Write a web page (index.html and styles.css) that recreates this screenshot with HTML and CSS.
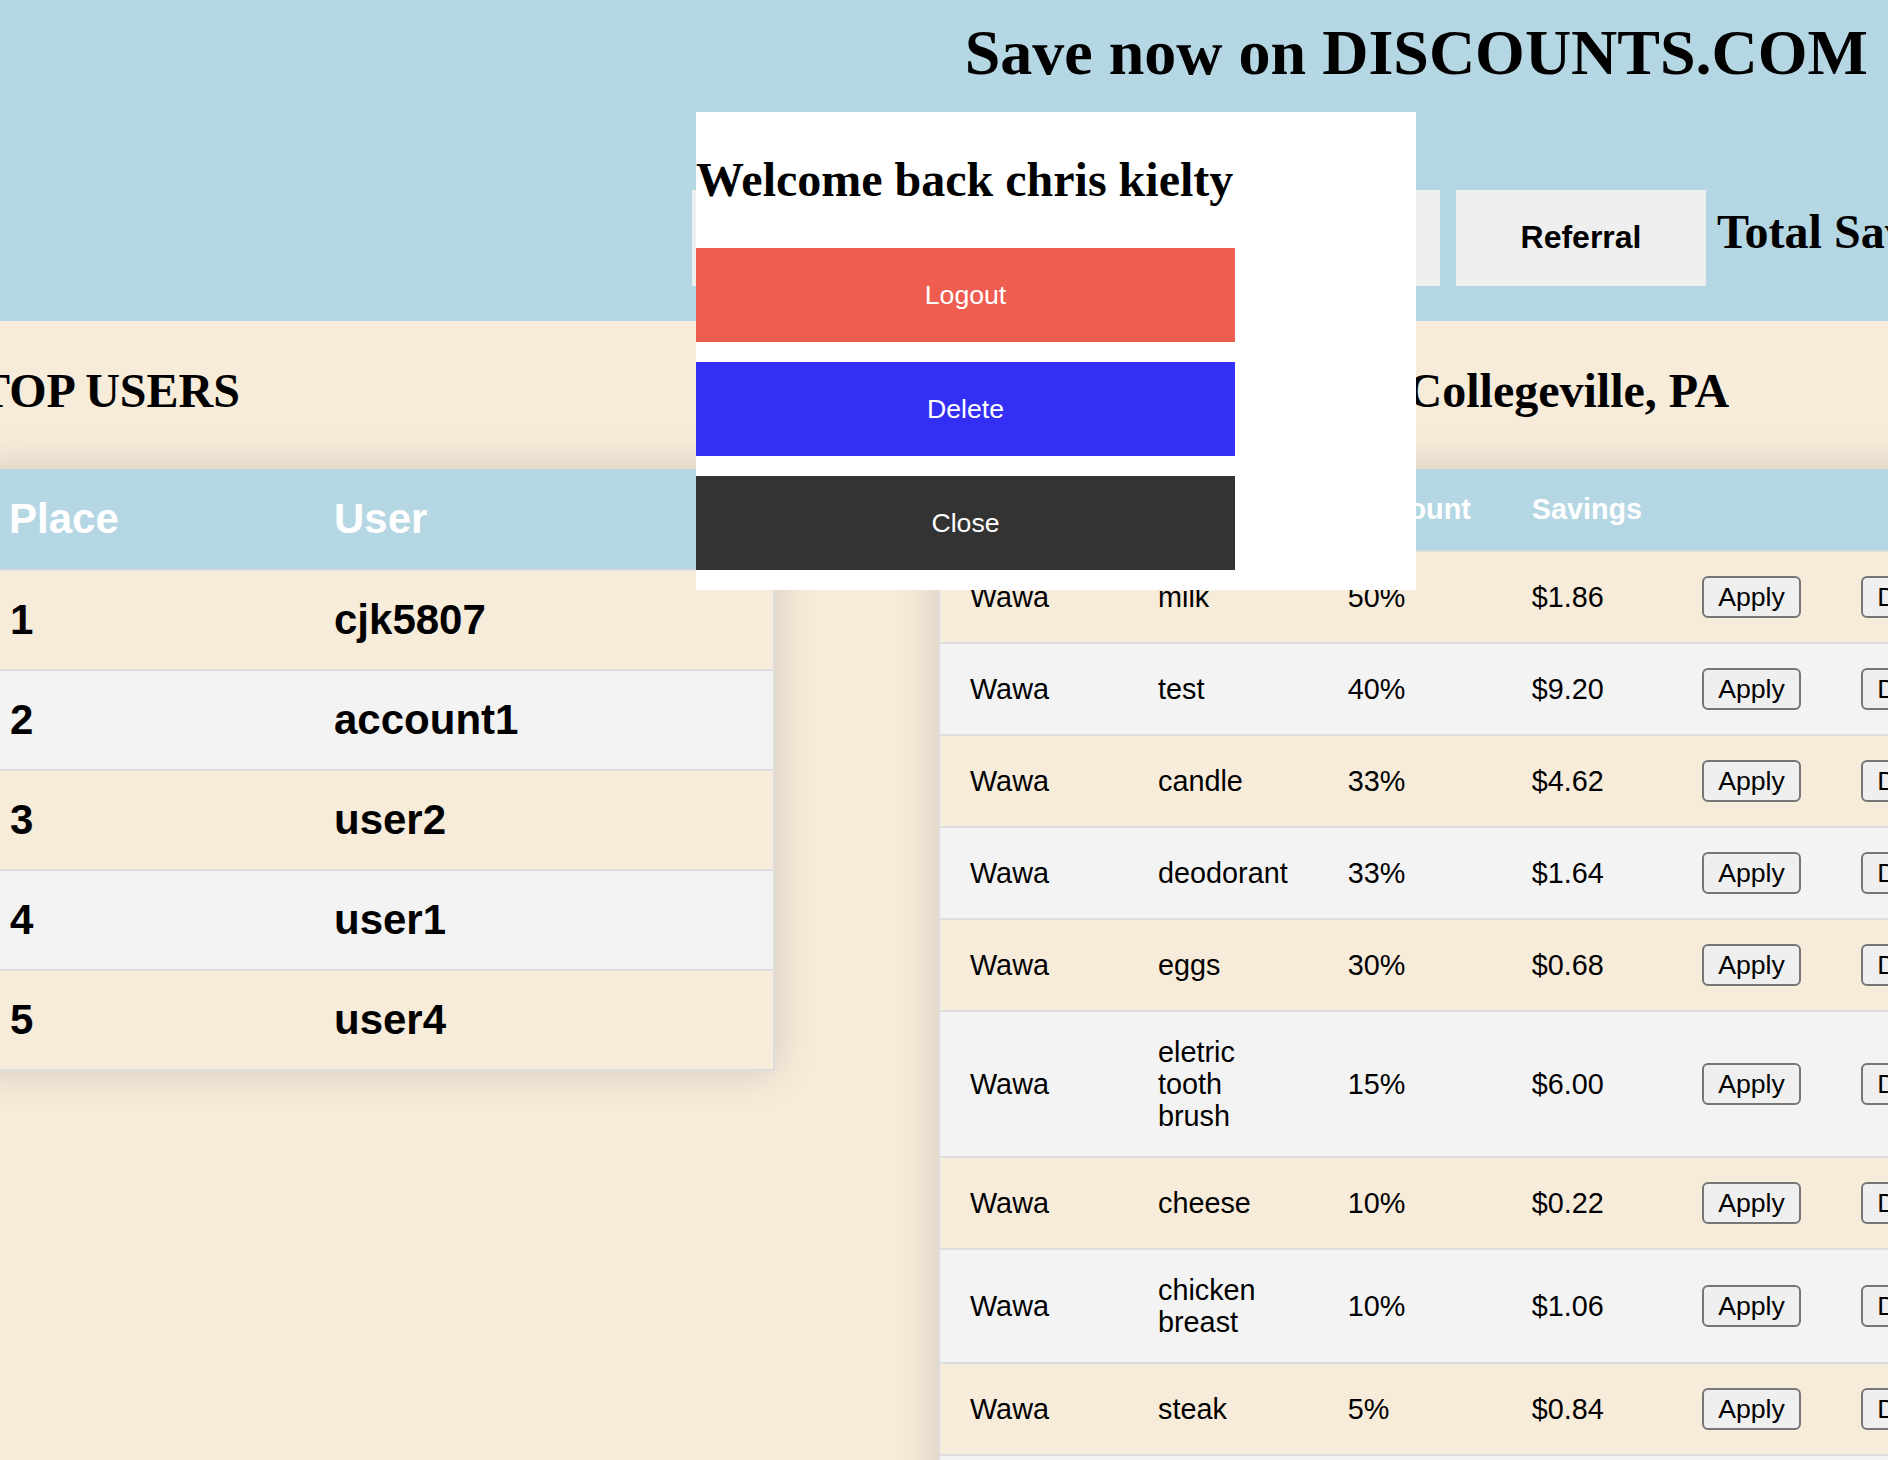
FILE: index.html
```html
<!DOCTYPE html>
<html lang="en">
<head>
<meta charset="utf-8">
<title>DISCOUNTS.COM</title>
<link rel="stylesheet" href="styles.css">
</head>
<body>
<header class="top">
  <h1 class="brand">Save now on DISCOUNTS.COM</h1>
  <nav class="nav">
    <div class="nav-buttons">
      <button class="nav-btn wide">Home</button>
      <button class="nav-btn wide">Add Discount</button>
      <button class="nav-btn">Referral</button>
    </div>
    <h2 class="total">Total Savings: $26.12</h2>
  </nav>
</header>

<main class="board">
  <section class="col">
    <h2 class="col-title">TOP USERS</h2>
    <table class="table leaders">
      <thead>
        <tr><th class="w-place">Place</th><th class="w-user">User</th></tr>
      </thead>
      <tbody>
        <tr><td>1</td><td>cjk5807</td></tr>
        <tr><td>2</td><td>account1</td></tr>
        <tr><td>3</td><td>user2</td></tr>
        <tr><td>4</td><td>user1</td></tr>
        <tr><td>5</td><td>user4</td></tr>
      </tbody>
    </table>
  </section>

  <section class="col">
    <h2 class="col-title"><span class="lead-in">TOP DISCOUNTS IN</span> Collegeville, PA</h2>
    <table class="table deals">
      <thead>
        <tr>
          <th class="w-store">Store</th>
          <th class="w-item">Item</th>
          <th class="w-disc">Discount</th>
          <th class="w-save">Savings</th>
          <th class="w-act"></th>
          <th class="w-act2"></th>
        </tr>
      </thead>
      <tbody>
        <tr><td>Wawa</td><td>milk</td><td>50%</td><td>$1.86</td><td><button class="act">Apply</button></td><td><button class="act">Delete</button></td></tr>
        <tr><td>Wawa</td><td>test</td><td>40%</td><td>$9.20</td><td><button class="act">Apply</button></td><td><button class="act">Delete</button></td></tr>
        <tr><td>Wawa</td><td>candle</td><td>33%</td><td>$4.62</td><td><button class="act">Apply</button></td><td><button class="act">Delete</button></td></tr>
        <tr><td>Wawa</td><td>deodorant</td><td>33%</td><td>$1.64</td><td><button class="act">Apply</button></td><td><button class="act">Delete</button></td></tr>
        <tr><td>Wawa</td><td>eggs</td><td>30%</td><td>$0.68</td><td><button class="act">Apply</button></td><td><button class="act">Delete</button></td></tr>
        <tr><td>Wawa</td><td>eletric tooth brush</td><td>15%</td><td>$6.00</td><td><button class="act">Apply</button></td><td><button class="act">Delete</button></td></tr>
        <tr><td>Wawa</td><td>cheese</td><td>10%</td><td>$0.22</td><td><button class="act">Apply</button></td><td><button class="act">Delete</button></td></tr>
        <tr><td>Wawa</td><td>chicken breast</td><td>10%</td><td>$1.06</td><td><button class="act">Apply</button></td><td><button class="act">Delete</button></td></tr>
        <tr><td>Wawa</td><td>steak</td><td>5%</td><td>$0.84</td><td><button class="act">Apply</button></td><td><button class="act">Delete</button></td></tr>
        <tr><td>Wawa</td><td>bread</td><td>5%</td><td>$0.15</td><td><button class="act">Apply</button></td><td><button class="act">Delete</button></td></tr>
      </tbody>
    </table>
  </section>
</main>

<div class="modal">
  <h2 class="modal-title">Welcome back chris kielty</h2>
  <button class="mbtn logout">Logout</button>
  <button class="mbtn delete">Delete</button>
  <button class="mbtn close">Close</button>
</div>
</body>
</html>
```

FILE: styles.css
```css
* {
  box-sizing: border-box;
}

html,
body {
  margin: 0;
  padding: 0;
  overflow: hidden;
}

body {
  position: relative;
  width: 1888px;
  height: 1460px;
  background: #f7ebda;
  color: #000;
  font-family: "Liberation Serif", "Times New Roman", serif;
}

/* ---------- header ---------- */
.top {
  display: flex;
  flex-direction: column;
  height: 321px;
  background: #b5d7e3;
}

.brand {
  margin: 16px 20px 0 0;
  font-size: 64px;
  line-height: 74px;
  font-weight: bold;
  text-align: right;
  white-space: nowrap;
}

.nav {
  display: flex;
  align-items: baseline;
  gap: 11px;
  margin: 100px 0 0 692px;
  white-space: nowrap;
}

.nav-buttons {
  display: flex;
  align-items: baseline;
  gap: 16px;
  flex: none;
}

.nav-btn {
  flex: none;
  width: 250px;
  height: 96px;
  padding: 29px 0 31px;
  border: none;
  background: #efefef;
  color: #000;
  font-family: "Liberation Sans", Arial, sans-serif;
  font-size: 32px;
  line-height: 36px;
  font-weight: bold;
  text-align: center;
}

.nav-btn.wide {
  width: 366px;
}

.total {
  flex: none;
  margin: 0;
  font-size: 48px;
  line-height: 53px;
  font-weight: bold;
}

/* ---------- board ---------- */
.board {
  display: flex;
  align-items: flex-start;
  gap: 163px;
  margin-left: -22px;
  padding-top: 43px;
}

.col {
  flex: none;
}

.col-title {
  margin: 0 0 52px;
  font-size: 48px;
  line-height: 53px;
  font-weight: bold;
  white-space: nowrap;
}

.lead-in {
  margin-right: 5px;
}

.table {
  border-collapse: collapse;
  box-shadow: 0 0 40px rgba(0, 0, 0, 0.15);
  font-family: "Liberation Sans", Arial, sans-serif;
}

.table thead tr {
  background: #b5d7e3;
  color: #fff;
  text-align: left;
  border-bottom: 2px solid #dddddd;
}

.table tbody tr {
  border-bottom: 2px solid #dddddd;
  border-left: 2px solid #dddddd;
  border-right: 2px solid #dddddd;
}

.table tbody tr:nth-of-type(even) {
  background: #f3f3f3;
}

/* leaders */
.leaders th,
.leaders td {
  padding: 25px 30px;
  font-size: 42px;
  line-height: 48px;
  font-weight: bold;
}

.leaders th {
  padding-top: 26px;
  padding-bottom: 26px;
}

.w-place { width: 325px; }
.w-user { width: 470px; }

/* deals */
.deals th,
.deals td {
  padding: 24px 30px;
  font-size: 28.8px;
  line-height: 32px;
  vertical-align: middle;
}

.deals th {
  font-weight: bold;
  padding-bottom: 25px;
}

.deals td {
  font-weight: normal;
}

.w-store { width: 189px; }
.w-item { width: 189px; }
.w-disc { width: 184px; }
.w-save { width: 170px; }
.w-act { width: 159px; }
.w-act2 { width: 160px; }

.act {
  display: block;
  height: 42px;
  padding: 0 14px;
  border: 2px solid #767676;
  border-radius: 6px;
  background: #efefef;
  color: #000;
  font-family: "Liberation Sans", Arial, sans-serif;
  font-size: 26.67px;
  line-height: 36px;
}

/* ---------- modal ---------- */
.modal {
  position: absolute;
  left: 696px;
  top: 112px;
  width: 720px;
  height: 478px;
  display: flex;
  flex-direction: column;
  align-items: flex-start;
  background: #fff;
}

.modal-title {
  margin: 41px 0 42px;
  font-size: 48px;
  line-height: 53px;
  font-weight: bold;
  white-space: nowrap;
}

.mbtn {
  width: 539px;
  height: 94px;
  border: none;
  color: #fff;
  font-family: "Liberation Sans", Arial, sans-serif;
  font-size: 26.67px;
  text-align: center;
}

.mbtn + .mbtn {
  margin-top: 20px;
}

.logout { background: #ef5c50; }
.delete { background: #332ff5; }
.close { background: #333333; }
```
